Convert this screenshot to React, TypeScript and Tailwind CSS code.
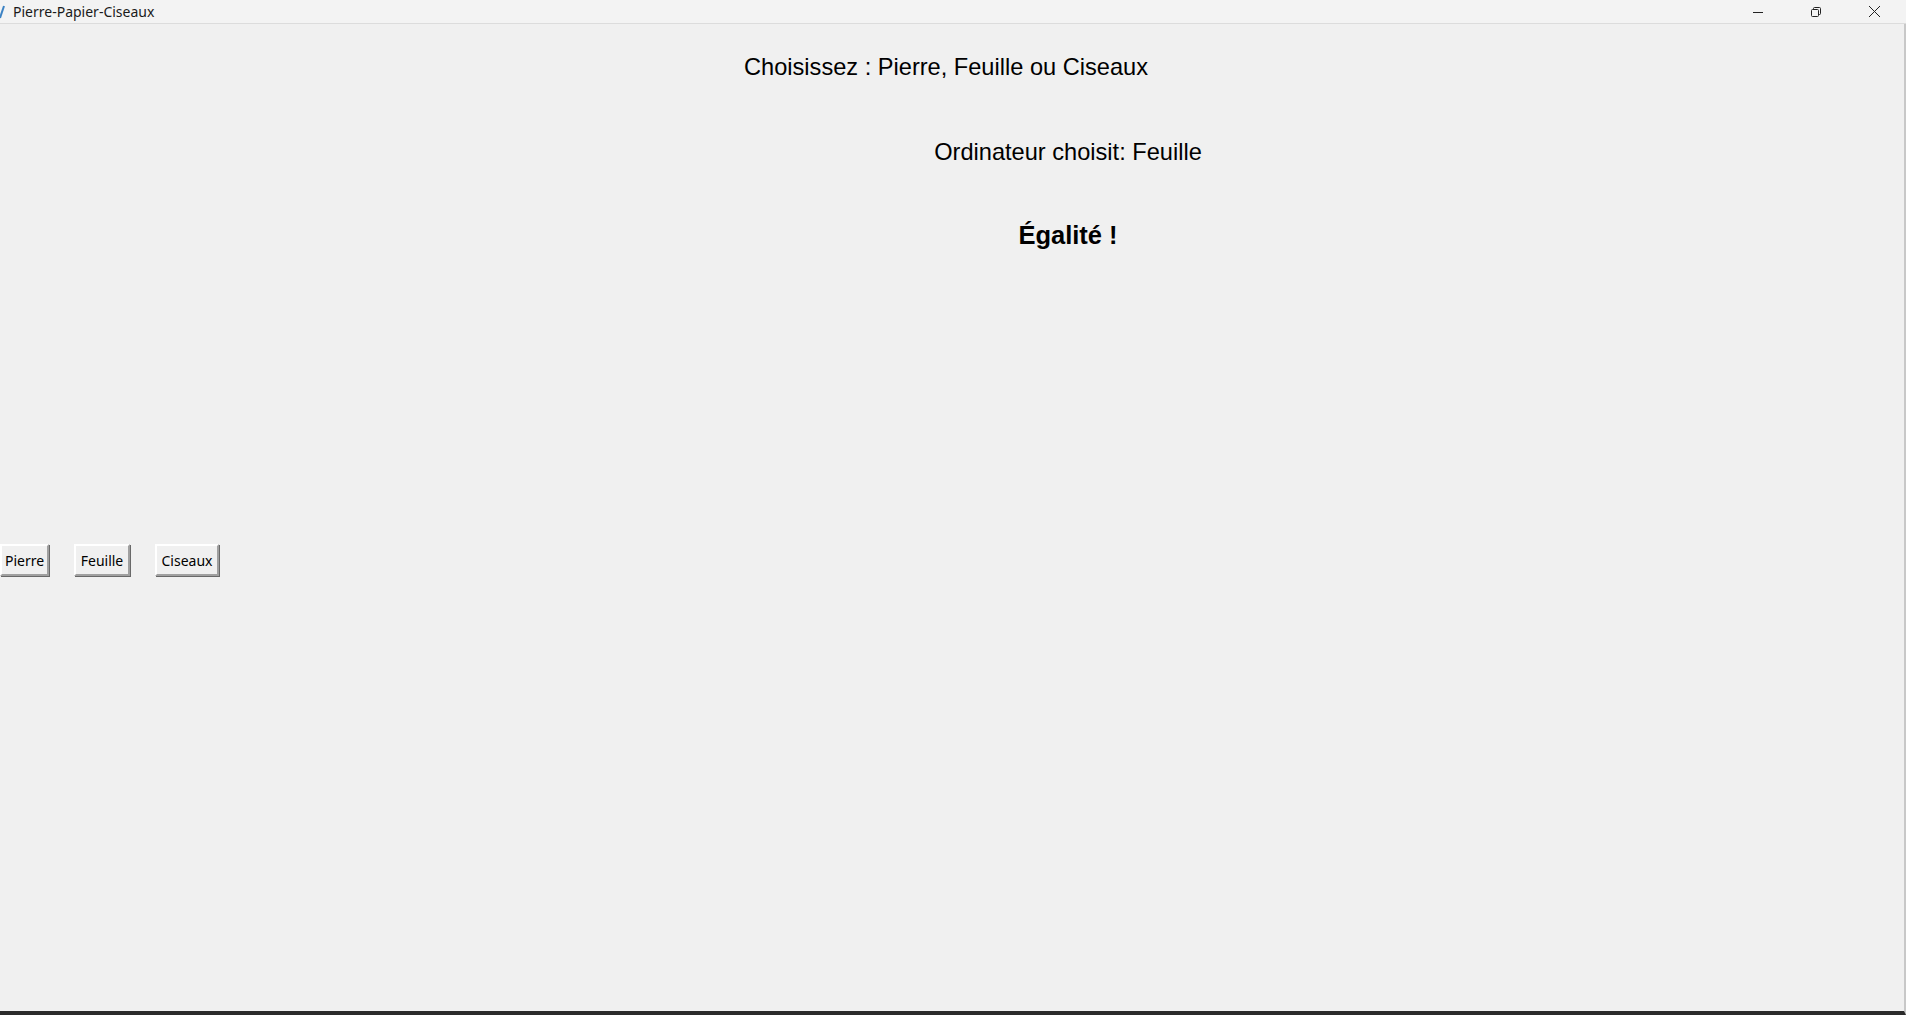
const choices = [
  { label: "Pierre", width: "w-[49px]" },
  { label: "Feuille", width: "w-[56px]" },
  { label: "Ciseaux", width: "w-[64px]" },
];

export default function App() {
  return (
    <div className="w-[1906px] h-[1015px] flex flex-col bg-[#f0f0f0] overflow-hidden" style={{ fontFamily: '"Liberation Sans", Arial, sans-serif' }}>
      {/* Title bar */}
      <div className="h-[24px] flex items-center bg-[#f3f3f3] border-b border-[#dcdcdc] shrink-0">
        <svg className="w-[5px] h-[14px] mr-[8px]" viewBox="0 0 5 14">
          <path d="M0 13 L4 1" stroke="#3b82c4" strokeWidth="2" />
        </svg>
        <span className="text-[14px] text-[#1a1a1a] leading-none" style={{ fontFamily: '"Noto Sans", "Open Sans", sans-serif' }}>
          Pierre-Papier-Ciseaux
        </span>
        <div className="ml-auto flex items-center h-full">
          <div className="w-[58px] h-full flex items-center justify-center">
            <svg width="12" height="12" viewBox="0 0 12 12"><path d="M1 6.5 H11" stroke="#222" strokeWidth="1" /></svg>
          </div>
          <div className="w-[58px] h-full flex items-center justify-center">
            <svg width="12" height="12" viewBox="0 0 12 12" fill="none" stroke="#222" strokeWidth="1">
              <rect x="1.5" y="3.5" width="7" height="7" rx="1" />
              <path d="M3.5 3.5 V2.5 a1 1 0 0 1 1 -1 H9.5 a1 1 0 0 1 1 1 V7.5 a1 1 0 0 1 -1 1 H8.5" />
            </svg>
          </div>
          <div className="w-[58px] h-full flex items-center justify-center mr-[3px]">
            <svg width="13" height="13" viewBox="0 0 13 13"><path d="M1 1 L12 12 M12 1 L1 12" stroke="#222" strokeWidth="1" /></svg>
          </div>
        </div>
      </div>

      {/* Window body */}
      <div className="flex-1 flex flex-col border-r-2 border-b-4 border-r-[#c8c8c8] border-b-[#2b2b2b]">
        <p className="mt-[29px] text-center text-[23.6px] leading-[28px] text-black pr-[12px]">
          Choisissez : Pierre, Feuille ou Ciseaux
        </p>
        <div className="flex flex-col items-center pl-[232px]">
          <p className="mt-[57px] text-[23.6px] leading-[28px] text-black">Ordinateur choisit: Feuille</p>
          <p className="mt-[55px] text-[25.5px] leading-[28px] font-bold text-black">Égalité !</p>
        </div>

        <div className="mt-[295px] flex gap-[25px]">
          {choices.map((c) => (
            <button
              key={c.label}
              className={`${c.width} h-[32px] bg-[#f0f0f0] text-[14px] text-black border-2 border-t-white border-l-white border-r-[#a0a0a0] border-b-[#a0a0a0] shadow-[1px_1px_0_#696969]`}
              style={{ fontFamily: '"Noto Sans", "Open Sans", sans-serif' }}
            >
              {c.label}
            </button>
          ))}
        </div>
      </div>
    </div>
  );
}
